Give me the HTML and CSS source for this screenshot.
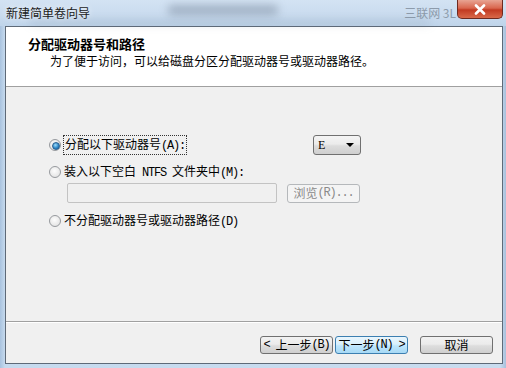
FILE: index.html
```html
<!DOCTYPE html>
<html lang="zh-CN">
<head>
<meta charset="utf-8">
<title>新建简单卷向导</title>
<link rel="stylesheet" href="styles.css">
</head>
<body>
<div class="window">
  <div class="titlebar">
    <span class="title">新建简单卷向导</span>
    <span class="glass g1"></span>
    <span class="glass g2"></span>
    <span class="spacer"></span>
    <span class="watermark">三联网 3L</span>
    <span class="close">
      <svg width="14" height="11" viewBox="0 0 14 11"><path d="M3 1.5 L11 9.5 M11 1.5 L3 9.5" stroke="#fff" stroke-width="2.6" stroke-linecap="round"/></svg>
    </span>
  </div>
  <div class="client">
    <div class="header">
      <div class="h-title">分配驱动器号和路径</div>
      <div class="h-sub">为了便于访问，可以给磁盘分区分配驱动器号或驱动器路径。</div>
    </div>
    <div class="body">
      <div class="row r1">
        <div class="opt opt-wide"><span class="radio checked"></span><span class="focus">分配以下驱动器号<span class="lat">(A):</span></span></div>
        <div class="combo"><span class="combo-text">E</span><span class="arrow"></span></div>
      </div>
      <div class="opt r2"><span class="radio"></span><span>装入以下空白<span class="lat"> NTFS </span>文件夹中<span class="lat">(M):</span></span></div>
      <div class="row r-path">
        <div class="textbox"></div>
        <div class="btn disabled">浏览<span class="lat">(R)...</span></div>
      </div>
      <div class="opt r3"><span class="radio"></span><span>不分配驱动器号或驱动器路径<span class="lat">(D)</span></span></div>
    </div>
    <div class="footer">
      <div class="btn"><span class="lat">&lt; </span>上一步<span class="lat">(B)</span></div>
      <div class="btn default">下一步<span class="lat">(N) &gt;</span></div>
      <div class="btn cancel">取消</div>
    </div>
  </div>
</div>
</body>
</html>
```
FILE: styles.css
```css
* { box-sizing: border-box; }
html, body { margin: 0; padding: 0; }
body {
  width: 506px;
  height: 368px;
  overflow: hidden;
  font-family: "Noto Sans CJK SC", "Noto Sans", sans-serif;
  font-size: 12px;
  color: #000;
  background: #b8cfe6;
}
.lat {
  font-family: "Liberation Mono", "DejaVu Sans Mono", monospace;
  font-size: 12px;
  letter-spacing: -1.2px;
  white-space: pre;
}
.window {
  width: 506px;
  height: 368px;
  background: linear-gradient(90deg, #a9c3df 0, #c6daee 5px, #c9dcef 500px, #a7c0dc 506px);
}
.titlebar {
  height: 26px;
  display: flex;
  align-items: flex-start;
  position: relative;
  background: linear-gradient(180deg, #d3e3f3 0, #cadcef 14px, #bfd4ea 26px);
}
.title {
  padding: 5px 0 0 6px;
  line-height: 16px;
  font-size: 12px;
  color: #1a1a1a;
  text-shadow: 0 0 6px rgba(255,255,255,0.9);
}
.glass {
  position: absolute;
  background: rgba(80, 95, 115, 0.35);
  filter: blur(4px);
  border-radius: 4px;
}
.g1 { left: 168px; top: 5px; width: 110px; height: 10px; }
.g2 { left: 30px; top: 21px; width: 400px; height: 4px; background: rgba(90,105,125,0.22); }
.spacer { flex: 1; }
.watermark {
  padding-top: 6px;
  line-height: 14px;
  color: #8d9bab;
  font-size: 12px;
  margin-right: 1px;
  white-space: nowrap;
}
.close {
  width: 46px;
  height: 19px;
  margin-right: 3px;
  border: 1px solid #6e2a20;
  border-top: none;
  border-radius: 0 0 5px 5px;
  background: linear-gradient(180deg, #e8a493 0, #d9664e 45%, #c23a22 55%, #d9694a 100%);
  display: flex;
  align-items: center;
  justify-content: center;
  position: relative;
  z-index: 1;
}
.client {
  margin: 0 3px 0 5px;
  height: 338px;
  border: 1px solid #5e6a78;
  background: #f0f0f0;
  display: flex;
  flex-direction: column;
}
.header {
  height: 60px;
  background: #fff;
  border-bottom: 1px solid #a0a0a0;
  padding: 8px 0 0 22px;
}
.h-title {
  font-weight: bold;
  font-size: 13px;
  line-height: 17px;
}
.h-sub {
  padding-left: 22px;
  line-height: 17px;
  font-size: 12px;
}
.body {
  height: 235px;
  border-bottom: 1px solid #a0a0a0;
  padding: 48px 0 0 43px;
  display: flex;
  flex-direction: column;
  align-items: flex-start;
}
.row { display: flex; align-items: center; }
.opt {
  display: flex;
  align-items: center;
  height: 16px;
  line-height: 16px;
  white-space: nowrap;
}
.opt-wide { width: 264px; }
.radio {
  width: 12px;
  height: 12px;
  border-radius: 50%;
  border: 1px solid #979a9e;
  background: radial-gradient(circle at 45% 40%, #fdfdfd 0, #e6e6e6 70%, #d2d2d2 100%);
  margin-right: 3px;
  flex: none;
  position: relative;
}
.radio.checked::after {
  content: "";
  position: absolute;
  left: 2px;
  top: 2px;
  width: 6px;
  height: 6px;
  border-radius: 50%;
  background: radial-gradient(circle at 40% 35%, #9fdcfa 0, #2c87c7 55%, #1b5e9b 100%);
  border: 0.5px solid #2a5f8f;
}
.focus {
  outline: 1px dotted #333;
  outline-offset: 0;
  padding: 0 1px;
}
.combo {
  width: 48px;
  height: 20px;
  border: 1px solid #707070;
  border-radius: 3px;
  background: linear-gradient(180deg, #f4f4f4 0, #ebebeb 45%, #dcdcdc 55%, #cfcfcf 100%);
  display: flex;
  align-items: center;
  justify-content: space-between;
  padding: 0 6px 0 4px;
  font-family: "Liberation Serif", "Noto Sans CJK SC", serif;
  font-size: 12px;
}
.arrow {
  width: 0;
  height: 0;
  border-left: 4px solid transparent;
  border-right: 4px solid transparent;
  border-top: 4px solid #000;
}
.r2 { margin-top: 9px; }
.r-path { margin: 3px 0 0 18px; }
.textbox {
  width: 210px;
  height: 20px;
  border: 1px solid #c3c3c3;
  border-radius: 2px;
  background: #f0f0f0;
}
.btn {
  width: 73px;
  height: 19px;
  border: 1px solid #707070;
  border-radius: 3px;
  background: linear-gradient(180deg, #f2f2f2 0, #ebebeb 45%, #dddddd 55%, #cfcfcf 100%);
  display: flex;
  align-items: center;
  justify-content: center;
  line-height: 16px;
  white-space: nowrap;
  font-size: 12px;
}
.btn.disabled {
  margin-left: 10px;
  border-color: #b5b8bb;
  background: #f4f4f4;
  color: #8a8a8a;
}
.r3 { margin-top: 10px; }
.footer {
  flex: 1;
  border-top: 1px solid #ffffff;
  display: flex;
  justify-content: flex-end;
  align-items: flex-start;
  padding: 13px 9px 0 0;
  gap: 2px;
}
.footer .btn { height: 18px; }
.btn.default {
  border-color: #3c7fb1;
  background: linear-gradient(180deg, #eaf6fd 0, #d9f0fc 45%, #bee6fd 55%, #a7d9f5 100%);
}
.btn.cancel { margin-left: 10px; }
```
